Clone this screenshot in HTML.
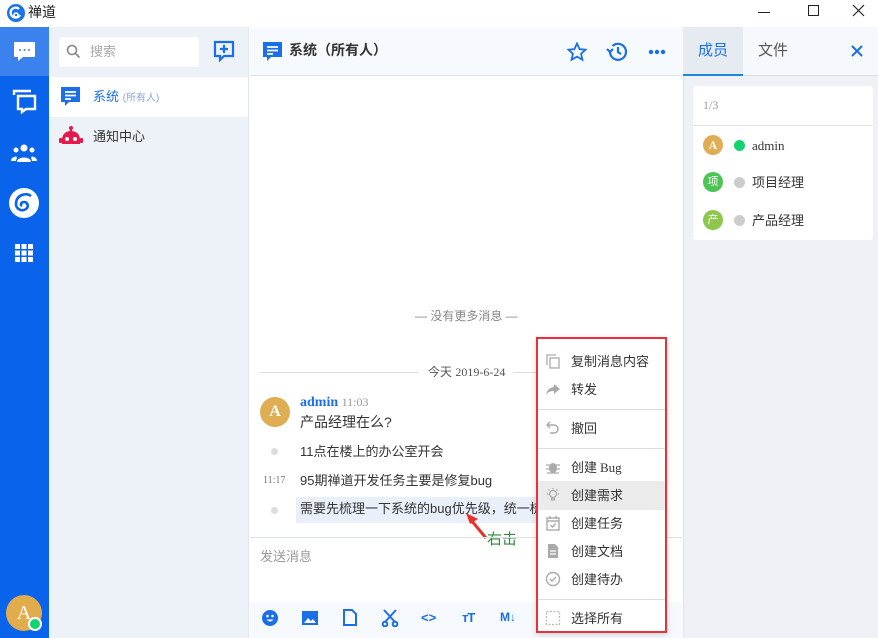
<!DOCTYPE html>
<html><head><meta charset="utf-8"><style>
*{margin:0;padding:0;box-sizing:border-box}
body{width:878px;height:638px;overflow:hidden;background:#fff;font-family:"Liberation Sans","Noto Sans CJK SC",sans-serif;font-size:13px;color:#333;position:relative}
.a{position:absolute;line-height:1.33}
.mi{position:absolute;left:8px;height:28px;width:122px;display:flex;align-items:center;font-size:13px;color:#333;line-height:1}
.mi svg{width:16px;height:16px;margin:0 10px 0 7px;flex:none}
.sep{position:absolute;left:2px;width:127px;height:1px;background:#ddd}
</style></head><body>
<div class="a" style="left:0;top:0;width:878px;height:27px;background:#fff"></div>
<svg class="a" style="left:7px;top:4px" width="18" height="18" viewBox="0 0 18 18"><circle cx="9" cy="9" r="9" fill="#1a73e8"/><path d="M12 5a5 5 0 1 0 1 6" stroke="#fff" stroke-width="2.2" fill="none"/><circle cx="9" cy="11" r="2" fill="none" stroke="#fff" stroke-width="1.6"/></svg>
<div class="a" style="left:28px;top:3px;font-size:14px;color:#222">禅道</div>
<div class="a" style="left:758px;top:12px;width:12px;height:1px;background:#222"></div>
<div class="a" style="left:808px;top:5px;width:11px;height:11px;border:1px solid #222"></div>
<svg class="a" style="left:852px;top:4px" width="13" height="13" viewBox="0 0 13 13" stroke="#222" stroke-width="1.2"><path d="M1 1l11 11M12 1L1 12"/></svg>

<div class="a" style="left:0;top:27px;width:49px;height:611px;background:#0a64eb"></div>
<div class="a" style="left:0;top:27px;width:49px;height:49px;background:#3b82ee"></div>
<svg class="a" style="left:13px;top:41px" width="23" height="22" viewBox="0 0 23 22"><path d="M1 1h21v15H10l-5 4v-4H1z" fill="#fff"/><circle cx="7" cy="9" r="1" fill="#3b82ee"/><circle cx="11.5" cy="9" r="1" fill="#3b82ee"/><circle cx="16" cy="9" r="1" fill="#3b82ee"/></svg>
<svg class="a" style="left:12px;top:89px" width="25" height="25" viewBox="0 0 25 25" fill="none" stroke="#fff" stroke-width="2.4"><path d="M2 6V2h17"/><path d="M6 7h17v13h-9l-4 3v-3H6z"/></svg>
<svg class="a" style="left:11px;top:143px" width="26" height="20" viewBox="0 0 26 20" fill="#fff"><circle cx="13" cy="5" r="3.5"/><circle cx="5" cy="7" r="2.5"/><circle cx="21" cy="7" r="2.5"/><path d="M6 19c0-6 14-6 14 0z"/><path d="M0 18c0-4 5-5 6-4l-1 4zM26 18c0-4-5-5-6-4l1 4z"/></svg>
<svg class="a" style="left:9px;top:188px" width="30" height="30" viewBox="0 0 30 30"><circle cx="15" cy="15" r="15" fill="#fff"/><path d="M22 8c-5-4-15-1-15 8 0 5 6 8 10 5 3-2 2-7-2-7-3 0-4 3-2 4" stroke="#0a64eb" stroke-width="2.6" fill="none"/></svg>
<svg class="a" style="left:15px;top:244px" width="18" height="18" viewBox="0 0 18 18" fill="#fff"><rect x="0" y="0" width="5" height="5"/><rect x="6.5" y="0" width="5" height="5"/><rect x="13" y="0" width="5" height="5"/><rect x="0" y="6.5" width="5" height="5"/><rect x="6.5" y="6.5" width="5" height="5"/><rect x="13" y="6.5" width="5" height="5"/><rect x="0" y="13" width="5" height="5"/><rect x="6.5" y="13" width="5" height="5"/><rect x="13" y="13" width="5" height="5"/></svg>
<div class="a" style="left:6px;top:595px;width:36px;height:36px;border-radius:50%;background:#e0ac4c;color:#fff;font-family:'Liberation Serif',serif;font-size:20px;text-align:center;line-height:36px">A</div>
<div class="a" style="left:28px;top:617px;width:14px;height:14px;border-radius:50%;background:#12d36f;border:2px solid #fff"></div>

<div class="a" style="left:49px;top:27px;width:200px;height:611px;background:#edf2f9;border-right:1px solid #e2e7ee"></div>
<div class="a" style="left:59px;top:37px;width:140px;height:30px;background:#fff;border-radius:3px"></div>
<svg class="a" style="left:66px;top:44px" width="15" height="15" viewBox="0 0 15 15" fill="none" stroke="#888" stroke-width="1.6"><circle cx="6" cy="6" r="4.5"/><path d="M9.5 9.5l4 4"/></svg>
<div class="a" style="left:90px;top:43px;color:#aaa;font-size:13px">搜索</div>
<svg class="a" style="left:213px;top:40px" width="22" height="22" viewBox="0 0 22 22" fill="none" stroke="#1a6fe6" stroke-width="2.2"><path d="M2 2h18v14h-9l-4 4v-4H2z"/><path d="M11 5v8M7 9h8"/></svg>
<div class="a" style="left:49px;top:77px;width:199px;height:40px;background:#fff"></div>
<svg class="a" style="left:60px;top:86px" width="21" height="22" viewBox="0 0 21 22"><path d="M1 1h19v15H9l-4 4v-4H1z" fill="#1a6fe6"/><path d="M5 6h11M5 9.5h11M5 13h6" stroke="#fff" stroke-width="1.8"/></svg>
<div class="a" style="left:93px;top:88px;color:#1a6fe6;font-size:13px">系统 <span style="font-size:10px;color:#8aa6d6">(所有人)</span></div>
<svg class="a" style="left:59px;top:126px" width="24" height="22" viewBox="0 0 24 22" fill="#e5194d"><circle cx="12" cy="2" r="2"/><rect x="11" y="2" width="2" height="4"/><path d="M3 14c0-6 4-9 9-9s9 3 9 9v4H3z"/><rect x="0" y="12" width="3" height="5" rx="1"/><rect x="21" y="12" width="3" height="5" rx="1"/><circle cx="8" cy="13" r="2" fill="#fff"/><circle cx="16" cy="13" r="2" fill="#fff"/></svg>
<div class="a" style="left:93px;top:128px;color:#333;font-size:13px">通知中心</div>

<div class="a" style="left:250px;top:27px;width:432px;height:49px;background:#f6f9fd;border-bottom:1px solid #dde3ea"></div>
<svg class="a" style="left:262px;top:41px" width="21" height="22" viewBox="0 0 21 22"><path d="M1 1h19v15H9l-4 4v-4H1z" fill="#1a6fe6"/><path d="M5 6h11M5 9.5h11M5 13h6" stroke="#fff" stroke-width="1.8"/></svg>
<div class="a" style="left:289px;top:41px;font-size:14px;font-weight:bold;color:#333">系统（所有人）</div>
<svg class="a" style="left:567px;top:42px" width="20" height="20" viewBox="0 0 20 20" fill="none" stroke="#1a6fe6" stroke-width="1.8"><path d="M10 1.5l2.6 5.6 6 .6-4.5 4 1.3 6L10 14.7 4.6 17.7l1.3-6-4.5-4 6-.6z"/></svg>
<svg class="a" style="left:606px;top:41px" width="22" height="21" viewBox="0 0 22 21" fill="none" stroke="#1a6fe6" stroke-width="2.2"><path d="M4 11a8 8 0 1 0 2.5-6"/><path d="M1 8l3 3 3-3"/><path d="M12 6v5l3 2"/></svg>
<svg class="a" style="left:648px;top:49px" width="18" height="6" viewBox="0 0 18 6" fill="#1a6fe6"><circle cx="3" cy="3" r="2.2"/><circle cx="9" cy="3" r="2.2"/><circle cx="15" cy="3" r="2.2"/></svg>

<div class="a" style="left:415px;top:309px;color:#888;font-size:12px">— 没有更多消息 —</div>
<div class="a" style="left:260px;top:372px;width:158px;height:1px;background:#ddd"></div>
<div class="a" style="left:513px;top:372px;width:25px;height:1px;background:#ddd"></div>
<div class="a" style="left:428px;top:365px;color:#555;font-size:12px">今天 <span style="font-family:'Liberation Serif',serif">2019-6-24</span></div>
<div class="a" style="left:260px;top:397px;width:30px;height:30px;border-radius:50%;background:#dfae53;color:#fff;font-family:'Liberation Serif',serif;font-size:16px;font-weight:bold;text-align:center;line-height:30px">A</div>
<div class="a" style="left:300px;top:394px;font-family:'Liberation Serif',serif;font-size:14px;font-weight:bold;color:#1a6fe6">admin <span style="font-weight:normal;font-size:12px;color:#999">11:03</span></div>
<div class="a" style="left:300px;top:413px;font-size:14px;color:#333">产品经理在么?</div>
<div class="a" style="left:271px;top:448px;width:7px;height:7px;border-radius:50%;background:#ddd"></div>
<div class="a" style="left:300px;top:443px;font-size:13px;color:#333">11点在楼上的办公室开会</div>
<div class="a" style="left:263px;top:474px;font-family:'Liberation Serif',serif;font-size:10px;color:#777">11:17</div>
<div class="a" style="left:300px;top:472px;font-size:13px;color:#333">95期禅道开发任务主要是修复bug</div>
<div class="a" style="left:296px;top:497px;width:240px;height:26px;background:#e9f0fa"></div>
<div class="a" style="left:271px;top:507px;width:7px;height:7px;border-radius:50%;background:#ddd"></div>
<div class="a" style="left:300px;top:500px;font-size:13px;color:#333;white-space:nowrap;width:236px;overflow:hidden">需要先梳理一下系统的bug优先级，统一梳理</div>
<svg class="a" style="left:462px;top:510px" width="30" height="30" viewBox="0 0 30 30"><path d="M24 28L9 10" stroke="#e8322a" stroke-width="3"/><path d="M4 3l12 6-8 5z" fill="#e8322a"/></svg>
<div class="a" style="left:487px;top:530px;color:#2e8b3a;font-size:15px">右击</div>

<div class="a" style="left:250px;top:537px;width:432px;height:1px;background:#dde3ea"></div>
<div class="a" style="left:260px;top:548px;color:#999;font-size:13px">发送消息</div>
<div class="a" style="left:250px;top:602px;width:432px;height:36px;background:#f6f9fd"></div>
<svg class="a" style="left:262px;top:610px" width="16" height="16" viewBox="0 0 16 16"><circle cx="8" cy="8" r="8" fill="#1a6fe6"/><circle cx="5.5" cy="6" r="1.3" fill="#fff"/><circle cx="10.5" cy="6" r="1.3" fill="#fff"/><path d="M4.5 9.5q3.5 4 7 0" fill="#fff"/></svg>
<svg class="a" style="left:302px;top:611px" width="16" height="14" viewBox="0 0 16 14"><rect width="16" height="14" fill="#1a6fe6"/><path d="M2 12l4-5 3 3 2-2 3 4z" fill="#fff"/></svg>
<svg class="a" style="left:343px;top:609px" width="14" height="17" viewBox="0 0 14 17" fill="none" stroke="#1a6fe6" stroke-width="2"><path d="M1 1h8l4 4v11H1z"/></svg>
<svg class="a" style="left:381px;top:609px" width="18" height="18" viewBox="0 0 18 18" fill="none" stroke="#1a6fe6" stroke-width="2"><path d="M3 1l11 12M15 1L4 13"/><circle cx="4" cy="15" r="2.3"/><circle cx="14" cy="15" r="2.3"/></svg>
<div class="a" style="left:421px;top:609px;color:#1a6fe6;font-size:13px;font-weight:bold">&lt;&gt;</div>
<div class="a" style="left:462px;top:609px;color:#1a6fe6;font-size:13px;font-weight:bold;letter-spacing:-1px">тT</div>
<div class="a" style="left:500px;top:610px;color:#1a6fe6;font-size:12px;font-weight:bold">M↓</div>

<div class="a" style="left:683px;top:27px;width:195px;height:611px;background:#eef2f7;border-left:1px solid #dde3ea"></div>
<div class="a" style="left:683px;top:27px;width:195px;height:49px;background:#f5f8fc;border-bottom:1px solid #d6dde6"></div>
<div class="a" style="left:683px;top:27px;width:60px;height:49px;background:#e6ebf2;border-bottom:2px solid #1a8ad4"></div>
<div class="a" style="left:698px;top:41px;color:#1a6fe6;font-size:15px">成员</div>
<div class="a" style="left:758px;top:41px;color:#555;font-size:15px">文件</div>
<svg class="a" style="left:851px;top:45px" width="12" height="12" viewBox="0 0 12 12" stroke="#1a6fe6" stroke-width="2"><path d="M1 1l10 10M11 1L1 11"/></svg>
<div class="a" style="left:693px;top:86px;width:180px;height:154px;background:#fff;border-radius:3px"></div>
<div class="a" style="left:693px;top:125px;width:180px;height:1px;background:#e3e3e3"></div>
<div class="a" style="left:703px;top:98px;font-family:'Liberation Serif',serif;font-size:12px;color:#999">1/3</div>
<div class="a" style="left:703px;top:135px;width:20px;height:20px;border-radius:50%;background:#dfae53;color:#fff;font-family:'Liberation Serif',serif;font-weight:bold;text-align:center;line-height:20px;font-size:12px">A</div>
<div class="a" style="left:734px;top:140px;width:11px;height:11px;border-radius:50%;background:#12d36f"></div>
<div class="a" style="left:752px;top:137px;font-family:'Liberation Serif',serif;font-size:13px;color:#333">admin</div>
<div class="a" style="left:703px;top:172px;width:20px;height:20px;border-radius:50%;background:#4cc552;color:#fff;text-align:center;line-height:20px;font-size:11px">项</div>
<div class="a" style="left:734px;top:177px;width:11px;height:11px;border-radius:50%;background:#ccc"></div>
<div class="a" style="left:752px;top:174px;font-size:13px;color:#333">项目经理</div>
<div class="a" style="left:703px;top:210px;width:20px;height:20px;border-radius:50%;background:#8cc84b;color:#fff;text-align:center;line-height:20px;font-size:11px">产</div>
<div class="a" style="left:734px;top:215px;width:11px;height:11px;border-radius:50%;background:#ccc"></div>
<div class="a" style="left:752px;top:212px;font-size:13px;color:#333">产品经理</div>

<div class="a" style="left:536px;top:337px;width:131px;height:296px;background:#fff;border:2px solid #e8313a;box-shadow:0 2px 6px rgba(0,0,0,.15)">
 <div class="mi" style="top:8px;left:0"><svg viewBox="0 0 16 16" fill="none" stroke="#aaa" stroke-width="1.3"><path d="M2 12V2h9"/><rect x="5" y="5" width="9" height="10"/></svg>复制消息内容</div>
 <div class="mi" style="top:36px;left:0"><svg viewBox="0 0 16 16" fill="#aaa"><path d="M9 3l6 5-6 5v-3C5 10 3 11 1 14c1-5 3-7 8-8z"/></svg>转发</div>
 <div class="sep" style="top:70px;left:0;width:127px"></div>
 <div class="mi" style="top:75px;left:0"><svg viewBox="0 0 16 16" fill="none" stroke="#aaa" stroke-width="1.4"><path d="M5 2L2 5l3 3"/><path d="M2 5h7a4 4 0 0 1 0 8H5"/></svg>撤回</div>
 <div class="sep" style="top:109px;left:0;width:127px"></div>
 <div class="mi" style="top:114px;left:0"><svg viewBox="0 0 16 16" fill="#aaa"><ellipse cx="8" cy="9" rx="4" ry="5"/><path d="M1 6h14M1 10h14M2 14h12" stroke="#aaa" stroke-width="1.3"/></svg>创建 <span style="font-family:'Liberation Serif',serif;margin-left:3px">Bug</span></div>
 <div class="a" style="left:0;top:142px;width:127px;height:29px;background:#ebebeb"></div>
 <div class="mi" style="top:142px;left:0"><svg viewBox="0 0 16 16" fill="none" stroke="#aaa" stroke-width="1.2"><circle cx="8" cy="7" r="3.5"/><path d="M6.5 11h3v2h-3zM8 1v1.5M2 7h1.5M12.5 7H14M3.5 2.5l1 1M12.5 2.5l-1 1"/></svg>创建需求</div>
 <div class="mi" style="top:170px;left:0"><svg viewBox="0 0 16 16" fill="none" stroke="#aaa" stroke-width="1.4"><rect x="2" y="3" width="12" height="12"/><path d="M2 6h12M5 1v3M11 1v3M5.5 10l2 2 3-3.5"/></svg>创建任务</div>
 <div class="mi" style="top:198px;left:0"><svg viewBox="0 0 16 16" fill="#aaa"><path d="M3 1h7l3 3v11H3z"/><path d="M5 8h6M5 11h6" stroke="#fff" stroke-width="1.3"/></svg>创建文档</div>
 <div class="mi" style="top:226px;left:0"><svg viewBox="0 0 16 16" fill="none" stroke="#aaa" stroke-width="1.4"><circle cx="8" cy="8" r="6.5"/><path d="M5 8l2 2 4-4"/></svg>创建待办</div>
 <div class="sep" style="top:260px;left:0;width:127px"></div>
 <div class="mi" style="top:265px;left:0"><svg viewBox="0 0 16 16" fill="none" stroke="#bbb" stroke-width="1.3" stroke-dasharray="2 1.5"><rect x="1.5" y="1.5" width="13" height="13"/></svg>选择所有</div>
</div>
</body></html>
